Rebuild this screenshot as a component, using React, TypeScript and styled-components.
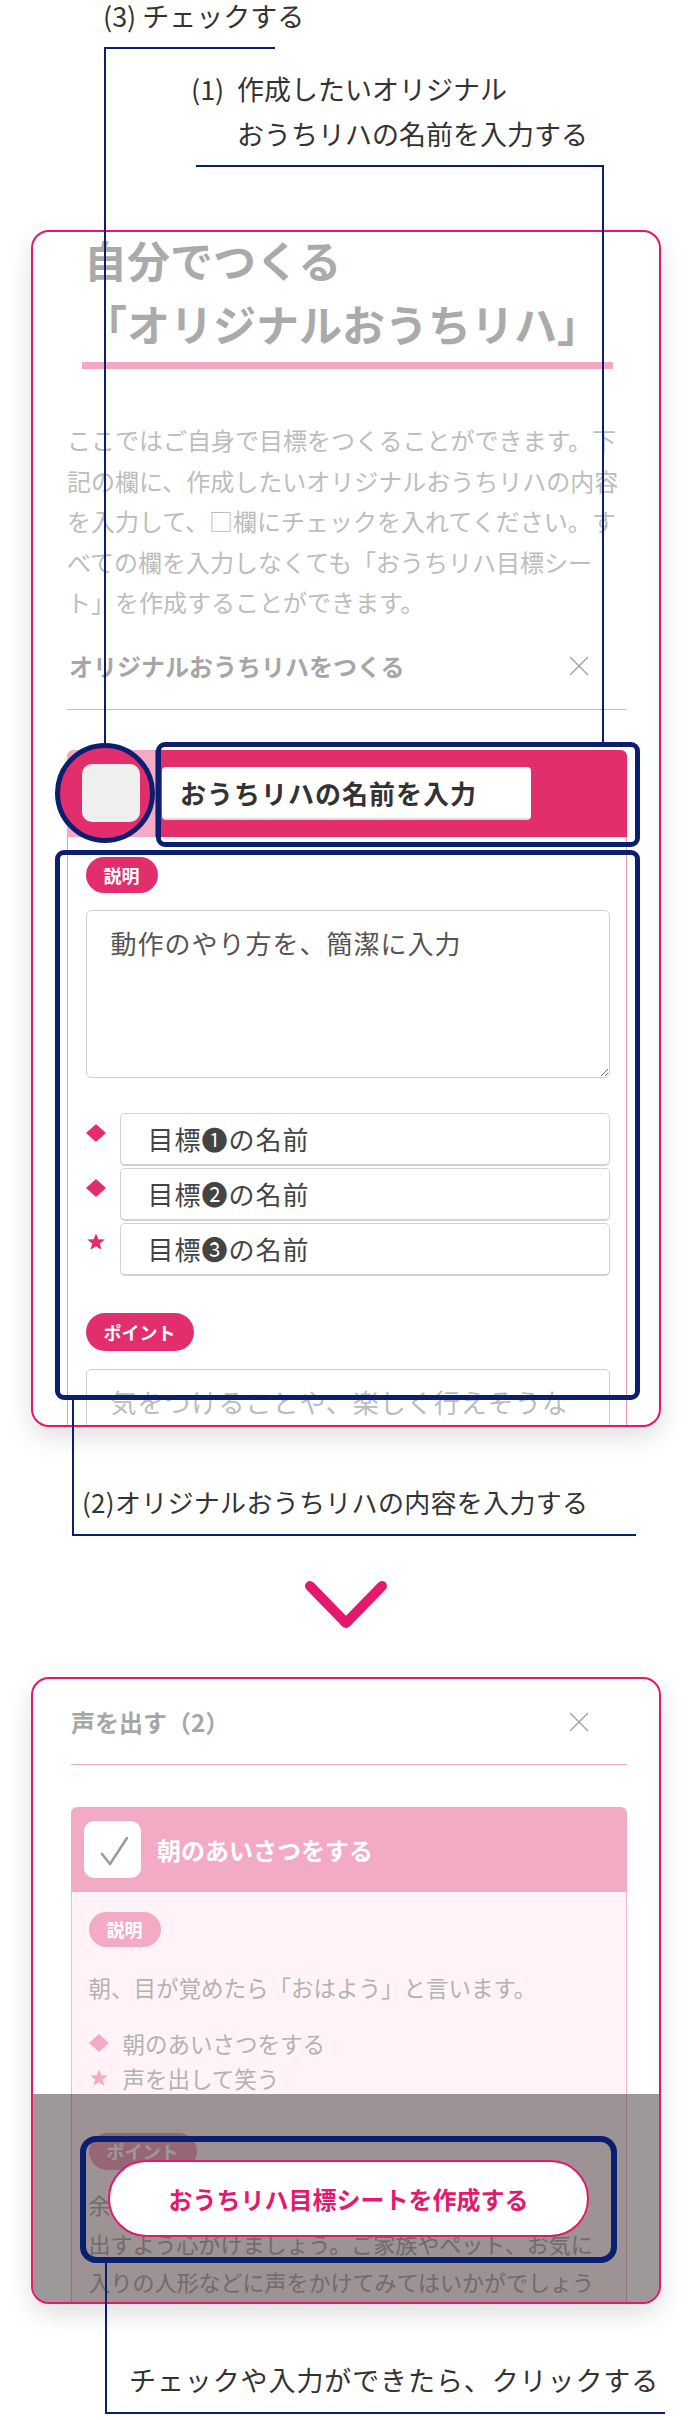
import React from 'react';
import styled, { createGlobalStyle } from 'styled-components';

const PINK = '#e5186b';
const STRONG = '#e32e6d';
const LIGHT = '#f3aac5';
const NAVY = '#0b1f70';
const FONT = '"Noto Sans CJK JP", "Noto Sans", sans-serif';

const GlobalStyle = createGlobalStyle`
  html, body {
    margin: 0;
    padding: 0;
    background: #fff;
  }
  body {
    font-family: ${FONT};
    color: #333;
  }
  * {
    box-sizing: border-box;
  }
`;

const Page = styled.div`
  position: relative;
  width: 692px;
  min-height: 2420px;
  overflow: hidden;
`;

/* annotations */

const TopNotes = styled.div`
  height: 230px;
`;

const Note = styled.div<{ $left: number; $top?: number; $size?: number }>`
  display: flex;
  align-items: flex-start;
  padding-left: ${p => p.$left}px;
  margin-top: ${p => p.$top ?? 0}px;
  font-size: ${p => p.$size ?? 27}px;
  line-height: 32px;
  color: #333;
  white-space: nowrap;
`;

const NoteLabel = styled.span<{ $width: number }>`
  flex: none;
  width: ${p => p.$width}px;
  line-height: 45px;
`;

const NoteLines = styled.div`
  line-height: 45px;
`;

const MidNote = styled.div<{ $left: number; $top: number; $size: number; $spacing?: number }>`
  padding: ${p => p.$top}px 0 0 ${p => p.$left}px;
  font-size: ${p => p.$size}px;
  letter-spacing: ${p => p.$spacing ?? 0}px;
  line-height: 36px;
  color: #333;
  white-space: nowrap;
`;

type Edges = { top?: boolean; right?: boolean; bottom?: boolean; left?: boolean };

const Connector = styled.div<{ $x: number; $y: number; $w: number; $h: number; $edges: Edges }>`
  position: absolute;
  z-index: 3;
  left: ${p => p.$x}px;
  top: ${p => p.$y}px;
  width: ${p => p.$w}px;
  height: ${p => p.$h}px;
  border: 0 solid ${NAVY};
  border-top-width: ${p => (p.$edges.top ? 2 : 0)}px;
  border-right-width: ${p => (p.$edges.right ? 2 : 0)}px;
  border-bottom-width: ${p => (p.$edges.bottom ? 2 : 0)}px;
  border-left-width: ${p => (p.$edges.left ? 2 : 0)}px;
  pointer-events: none;
`;

const Frame = styled.div<{ $x: number; $y: number; $w: number; $h: number; $radius: string; $weight: number; $fill?: string }>`
  position: absolute;
  z-index: ${p => (p.$fill ? 1 : 3)};
  left: ${p => p.$x}px;
  top: ${p => p.$y}px;
  width: ${p => p.$w}px;
  height: ${p => p.$h}px;
  border: ${p => p.$weight}px solid ${NAVY};
  border-radius: ${p => p.$radius};
  background: ${p => p.$fill ?? 'transparent'};
  pointer-events: none;
`;

const Chevron = styled.svg`
  display: block;
  margin: 60px auto 0;
`;

/* cards */

const Card = styled.section<{ $height: number; $top?: number; $padLeft: number }>`
  position: relative;
  margin: ${p => p.$top ?? 0}px 31px 0;
  height: ${p => p.$height}px;
  padding: 0 32px 0 ${p => p.$padLeft}px;
  border: 2px solid ${PINK};
  border-radius: 18px;
  background: #fff;
  overflow: hidden;
  box-shadow: 0 10px 26px rgba(0, 0, 0, 0.13);
`;

const Title = styled.h1`
  margin: -5px 0 0;
  padding-left: 17px;
  font-size: 43px;
  line-height: 64px;
  font-weight: 700;
  color: #aaa;
  white-space: nowrap;
`;

const TitleRule = styled.div`
  margin: 7px 0 0 15px;
  width: 531px;
  height: 7px;
  background: #f3a7c4;
`;

const Intro = styled.p`
  margin: 51px 0 0;
  font-size: 24px;
  line-height: 40.5px;
  color: #bdbdbd;
`;

const SectionHead = styled.div<{ $top: number; $indent: number; $pad: number }>`
  display: flex;
  align-items: center;
  justify-content: space-between;
  margin-top: ${p => p.$top}px;
  padding: 0 38px ${p => p.$pad}px ${p => p.$indent}px;
  border-bottom: 1.5px solid #f3a9c4;
  font-size: 24px;
  line-height: 36px;
  font-weight: 700;
  color: #a6a6a6;
`;

const Item = styled.div<{ $top: number }>`
  margin-top: ${p => p.$top}px;
`;

const ItemHead = styled.div<{ $height: number; $bg?: string; $padLeft?: number }>`
  display: flex;
  align-items: center;
  height: ${p => p.$height}px;
  padding-left: ${p => p.$padLeft ?? 0}px;
  border-radius: 6px 6px 0 0;
  background: ${p => p.$bg ?? 'transparent'};
  overflow: hidden;
`;

const CheckCell = styled.div`
  flex: none;
  display: flex;
  align-items: center;
  justify-content: center;
  width: 88px;
  height: 100%;
  background: ${LIGHT};
`;

const NameCell = styled.div`
  flex: 1;
  display: flex;
  align-items: center;
  height: 100%;
  padding-left: 7px;
  background: ${STRONG};
`;

const CheckBox = styled.span<{ $size: number; $checked?: boolean }>`
  position: relative;
  z-index: 2;
  flex: none;
  display: flex;
  align-items: center;
  justify-content: center;
  width: ${p => p.$size}px;
  height: ${p => p.$size}px;
  border-radius: 10px;
  background: ${p => (p.$checked ? '#fff' : '#efefef')};
`;

const NameInput = styled.input`
  width: 369px;
  height: 53px;
  padding: 0 18px;
  border: none;
  border-bottom: 2px solid #dcdcdc;
  border-radius: 4px;
  background: #fff;
  font-family: ${FONT};
  font-size: 26px;
  font-weight: 700;
  letter-spacing: 1px;
  &::placeholder {
    color: #333;
  }
`;

const ItemTitle = styled.span`
  margin-left: 16px;
  font-size: 24px;
  font-weight: 700;
  color: #fff;
`;

const ItemBody = styled.div<{ $bg: string; $line: string; $padLeft: number }>`
  padding: 20px 16.5px 0 ${p => p.$padLeft}px;
  border-left: 1.5px solid ${p => p.$line};
  border-right: 1.5px solid ${p => p.$line};
  background: ${p => p.$bg};
  min-height: 700px;
`;

const Badge = styled.div<{ $bg: string; $height: number; $top?: number }>`
  width: fit-content;
  margin-top: ${p => p.$top ?? 0}px;
  height: ${p => p.$height}px;
  padding: 0 18px;
  border-radius: 20px;
  background: ${p => p.$bg};
  font-size: 18px;
  line-height: ${p => p.$height}px;
  font-weight: 700;
  color: #fff;
`;

const TextArea = styled.textarea<{ $hint: string; $top: number }>`
  display: block;
  width: 100%;
  height: 168px;
  margin-top: ${p => p.$top}px;
  padding: 12px 24px;
  border: 1.5px solid #cfcfcf;
  border-radius: 5px;
  font-family: ${FONT};
  font-size: 26px;
  line-height: 39px;
  letter-spacing: 1px;
  resize: both;
  &::placeholder {
    color: ${p => p.$hint};
  }
`;

const GoalList = styled.div`
  display: flex;
  flex-direction: column;
  gap: 2px;
  margin-top: 35px;
`;

const GoalRow = styled.div`
  display: flex;
  align-items: flex-start;
`;

const GoalMark = styled.span<{ $pad: number }>`
  flex: none;
  width: 34px;
  padding-top: ${p => p.$pad}px;
  line-height: 0;
`;

const GoalInput = styled.input`
  flex: 1;
  min-width: 0;
  height: 53px;
  padding: 0 0 0 27px;
  border: 1.5px solid #d2d2d2;
  border-bottom-width: 2.5px;
  border-radius: 5px;
  font-family: ${FONT};
  font-size: 26px;
  letter-spacing: 1px;
  &::placeholder {
    color: #444;
  }
`;

const Desc = styled.p<{ $top: number; $size: number; $line: number }>`
  margin: ${p => p.$top}px 0 0;
  font-size: ${p => p.$size}px;
  line-height: ${p => p.$line}px;
  color: #b2b2b2;
  white-space: nowrap;
`;

const DoneList = styled.div`
  margin-top: 18px;
`;

const DoneRow = styled.div`
  display: flex;
  align-items: center;
  height: 35px;
  font-size: 22.5px;
  color: #b2b2b2;
`;

const DoneMark = styled.span`
  flex: none;
  width: 34px;
  line-height: 0;
`;

const Footer = styled.div`
  position: absolute;
  z-index: 1;
  left: 0;
  right: 0;
  bottom: 0;
  height: 208px;
  display: flex;
  align-items: center;
  justify-content: center;
  padding-left: 5px;
  background: rgba(10, 0, 0, 0.4);
`;

const CreateButton = styled.button`
  width: 481px;
  height: 77px;
  border: 2px solid ${PINK};
  border-radius: 40px;
  background: #fff;
  font-family: ${FONT};
  font-size: 24px;
  font-weight: 700;
  color: ${PINK};
`;

/* icons */

const CloseIcon = () => (
  <svg width="20" height="20" viewBox="0 0 20 20">
    <path d="M1 1 L19 19 M19 1 L1 19" stroke="#a8a8a8" strokeWidth="1.6" fill="none" />
  </svg>
);

const Diamond = ({ color }: { color: string }) => (
  <svg width="20" height="18" viewBox="0 0 20 18">
    <polygon points="10,1 19,9 10,17 1,9" fill={color} stroke={color} strokeWidth="1.5" strokeLinejoin="round" />
  </svg>
);

const Star = ({ color }: { color: string }) => (
  <svg width="20" height="18" viewBox="0 0 20 18">
    <polygon
      points="10,0.5 12.4,6.3 18.8,6.6 13.8,10.6 15.5,16.8 10,13.3 4.5,16.8 6.2,10.6 1.2,6.6 7.6,6.3"
      fill={color}
    />
  </svg>
);

const Tick = () => (
  <svg width="57" height="57" viewBox="0 0 57 57">
    <path d="M18 33 L26 43 L43 17" stroke="#9c9c9c" strokeWidth="2.6" fill="none" strokeLinecap="round" strokeLinejoin="round" />
  </svg>
);

const goals = [
  { mark: 'diamond', hint: '目標❶の名前', pad: 11 },
  { mark: 'diamond', hint: '目標❷の名前', pad: 11 },
  { mark: 'star', hint: '目標❸の名前', pad: 10 }
];

export default function App() {
  return (
    <Page>
      <GlobalStyle />

      <TopNotes>
        <Note $left={103}>(3) チェックする</Note>
        <Note $left={191} $top={33.5}>
          <NoteLabel $width={46}>(1)</NoteLabel>
          <NoteLines>
            作成したいオリジナル
            <br />
            おうちリハの名前を入力する
          </NoteLines>
        </Note>
      </TopNotes>

      <Card $height={1197} $padLeft={34}>
        <Title>
          自分でつくる
          <br />
          「オリジナルおうちリハ」
        </Title>
        <TitleRule />
        <Intro>
          ここではご自身で目標をつくることができます。下記の欄に、作成したいオリジナルおうちリハの内容を入力して、□欄にチェックを入れてください。すべての欄を入力しなくても「おうちリハ目標シート」を作成することができます。
        </Intro>
        <SectionHead $top={25} $indent={2} $pad={25}>
          オリジナルおうちリハをつくる
          <CloseIcon />
        </SectionHead>

        <Item $top={40}>
          <ItemHead $height={87}>
            <CheckCell>
              <CheckBox $size={58} />
            </CheckCell>
            <NameCell>
              <NameInput placeholder="おうちリハの名前を入力" />
            </NameCell>
          </ItemHead>
          <ItemBody $bg="#fff" $line="#f09ab9" $padLeft={17.5}>
            <Badge $bg={STRONG} $height={36}>説明</Badge>
            <TextArea $top={17} $hint="#555" placeholder="動作のやり方を、簡潔に入力" />
            <GoalList>
              {goals.map(g => (
                <GoalRow key={g.hint}>
                  <GoalMark $pad={g.pad}>
                    {g.mark === 'star' ? <Star color={STRONG} /> : <Diamond color={STRONG} />}
                  </GoalMark>
                  <GoalInput placeholder={g.hint} />
                </GoalRow>
              ))}
            </GoalList>
            <Badge $bg={STRONG} $height={38} $top={37}>ポイント</Badge>
            <TextArea $top={18} $hint="#bbb" placeholder="気をつけることや、楽しく行えそうな工夫を入力" />
          </ItemBody>
        </Item>
      </Card>

      <MidNote $left={82} $top={57} $size={26} $spacing={0.3}>
        (2)オリジナルおうちリハの内容を入力する
      </MidNote>

      <Chevron width="94" height="50" viewBox="0 0 94 50">
        <polyline points="11,6 47,43 83,6" stroke={PINK} strokeWidth="10" fill="none" strokeLinecap="round" strokeLinejoin="round" />
      </Chevron>

      <Card $height={627} $top={47} $padLeft={38}>
        <SectionHead $top={25} $indent={0} $pad={24}>
          声を出す（2）
          <CloseIcon />
        </SectionHead>
        <Item $top={42}>
          <ItemHead $height={85} $bg={LIGHT} $padLeft={13}>
            <CheckBox $size={57} $checked>
              <Tick />
            </CheckBox>
            <ItemTitle>朝のあいさつをする</ItemTitle>
          </ItemHead>
          <ItemBody $bg="#fff3f7" $line="#f5b9ce" $padLeft={16.5}>
            <Badge $bg={LIGHT} $height={35}>説明</Badge>
            <Desc $top={20} $size={22.5} $line={40}>
              朝、目が覚めたら「おはよう」と言います。
            </Desc>
            <DoneList>
              <DoneRow>
                <DoneMark>
                  <Diamond color={LIGHT} />
                </DoneMark>
                朝のあいさつをする
              </DoneRow>
              <DoneRow>
                <DoneMark>
                  <Star color={LIGHT} />
                </DoneMark>
                声を出して笑う
              </DoneRow>
            </DoneList>
            <Badge $bg={LIGHT} $height={37} $top={37.5}>ポイント</Badge>
            <Desc $top={15.5} $size={22} $line={38.5}>
              余裕があれば、いつもより少し大きめの声を
              <br />
              出すよう心がけましょう。ご家族やペット、お気に
              <br />
              入りの人形などに声をかけてみてはいかがでしょう
            </Desc>
          </ItemBody>
        </Item>
        <Footer>
          <CreateButton>おうちリハ目標シートを作成する</CreateButton>
        </Footer>
      </Card>

      <MidNote $left={129} $top={58} $size={27} $spacing={0.9}>
        チェックや入力ができたら、クリックする
      </MidNote>

      <Connector $x={104} $y={47} $w={171} $h={696} $edges={{ top: true, left: true }} />
      <Connector $x={196} $y={165} $w={408} $h={577} $edges={{ top: true, right: true }} />
      <Connector $x={72} $y={1400} $w={564} $h={136} $edges={{ left: true, bottom: true }} />
      <Connector $x={105} $y={2263} $w={560} $h={151} $edges={{ left: true, bottom: true }} />

      <Frame $x={55} $y={743} $w={100} $h={100} $radius="50%" $weight={5} $fill={STRONG} />
      <Frame $x={156} $y={742} $w={484} $h={105} $radius="9px" $weight={5} />
      <Frame $x={55} $y={850} $w={585} $h={550} $radius="9px" $weight={5} />
      <Frame $x={80} $y={2136} $w={537} $h={127} $radius="16px" $weight={6} />
    </Page>
  );
}
